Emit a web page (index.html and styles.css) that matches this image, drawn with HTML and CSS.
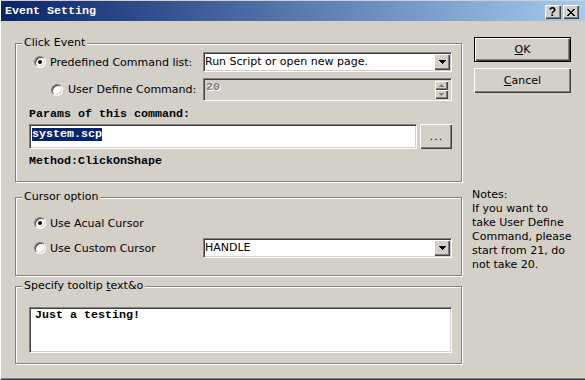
FILE: index.html
```html
<!DOCTYPE html>
<html lang="en">
<head>
  <meta charset="UTF-8">
  <meta name="viewport" content="width=device-width, initial-scale=1.0">
  <link rel="stylesheet" href="styles.css">
  <title>Event Setting</title>
</head>
<body>

<div class="dialog">
  <div class="titlebar">
    <div class="title-text">Event Setting</div>
    <div class="caption-buttons">
      <div class="caption-btn help">?</div>
      <div class="caption-btn close">
        <svg width="8" height="7" viewBox="0 0 8 7" shape-rendering="crispEdges">
          <path d="M0 0h2v1h1v1h2v-1h1v-1h2v1h-1v1h-1v1h-1v1h1v1h1v1h1v1h-2v-1h-1v-1h-2v1h-1v1h-2v-1h1v-1h1v-1h1v-1h-1v-1h-1v-1h-1z" fill="#000"/>
        </svg>
      </div>
    </div>
  </div>

  <div class="client">
    <div class="groups">

      <div class="group group-click">
        <div class="group-title">Click Event</div>

        <div class="option-row first-row">
          <div class="option">
            <span class="radio"><span class="radio-dot"></span></span>
            <span>Predefined Command list:</span>
          </div>
          <div class="combo">
            <span class="combo-text">Run Script or open new page.</span>
            <div class="combo-btn">
              <svg width="7" height="4" viewBox="0 0 7 4" shape-rendering="crispEdges"><path d="M0 0h7v1h-1v1h-1v1h-1v1h-1v-1h-1v-1h-1v-1h-1z" fill="#000"/></svg>
            </div>
          </div>
        </div>

        <div class="option-row spin-row">
          <div class="option indent">
            <span class="radio"></span>
            <span>User Define Command:</span>
          </div>
          <div class="spin">
            <span class="spin-text">20</span>
            <div class="spin-buttons">
              <div class="spin-btn">
                <svg width="5" height="3" viewBox="0 0 5 3" shape-rendering="crispEdges"><path d="M2 0h1v1h1v1h1v1h-5v-1h1v-1h1z" fill="#808080"/></svg>
              </div>
              <div class="spin-btn">
                <svg width="5" height="3" viewBox="0 0 5 3" shape-rendering="crispEdges"><path d="M0 0h5v1h-1v1h-1v1h-1v-1h-1v-1h-1z" fill="#808080"/></svg>
              </div>
            </div>
          </div>
        </div>

        <div class="mono-label params-label">Params of this command:</div>

        <div class="edit-row">
          <div class="edit"><span class="selected">system.scp</span></div>
          <div class="btn browse-btn">...</div>
        </div>

        <div class="mono-label method-label">Method:ClickOnShape</div>
      </div>

      <div class="group group-cursor">
        <div class="group-title">Cursor option</div>

        <div class="option-row cursor-first">
          <div class="option">
            <span class="radio"><span class="radio-dot"></span></span>
            <span>Use Acual Cursor</span>
          </div>
        </div>

        <div class="option-row cursor-second">
          <div class="option">
            <span class="radio"></span>
            <span>Use Custom Cursor</span>
          </div>
          <div class="combo">
            <span class="combo-text">HANDLE</span>
            <div class="combo-btn">
              <svg width="7" height="4" viewBox="0 0 7 4" shape-rendering="crispEdges"><path d="M0 0h7v1h-1v1h-1v1h-1v1h-1v-1h-1v-1h-1v-1h-1z" fill="#000"/></svg>
            </div>
          </div>
        </div>
      </div>

      <div class="group group-tooltip">
        <div class="group-title">Specify tooltip <u>t</u>ext&amp;o</div>
        <div class="memo">Just a testing!</div>
      </div>

    </div>

    <div class="side">
      <div class="btn btn-default"><span><u>O</u>K</span></div>
      <div class="btn btn-cancel"><span><u>C</u>ancel</span></div>
      <div class="notes">
        Notes:<br>
        If you want to<br>
        take User Define<br>
        Command, please<br>
        start from 21, do<br>
        not take 20.
      </div>
    </div>
  </div>
</div>

</body>
</html>
```

FILE: styles.css
```css
* {
  box-sizing: border-box;
}

body {
  margin: 0;
  background-color: #d4d0c8;
}

.dialog {
  width: 585px;
  height: 380px;
  background-color: #d4d0c8;
  border-top: 1px solid #d4d0c8;
  border-left: 1px solid #fff;
  border-bottom: 1px solid #404040;
  box-shadow: inset 0 -1px 0 #808080;
  font-family: "DejaVu Sans", sans-serif;
  font-size: 11px;
  color: #000;
}

/* title bar */
.titlebar {
  height: 20px;
  display: flex;
  align-items: flex-start;
  background: linear-gradient(to right, #0a246a, #a6caf0);
}

.title-text {
  padding: 1px 0 0 4px;
  line-height: 19px;
  color: #fff;
  font-family: "Liberation Mono", monospace;
  font-weight: bold;
  font-size: 11.67px;
}

.caption-buttons {
  margin-left: auto;
  margin-right: 6px;
  padding-top: 4px;
  display: flex;
  gap: 2px;
}

.caption-btn {
  width: 16px;
  height: 14px;
  display: flex;
  align-items: center;
  justify-content: center;
  background-color: #d4d0c8;
  box-shadow: inset 1px 1px 0 #fff, inset -1px -1px 0 #404040, inset -2px -2px 0 #808080;
}

.caption-btn.help {
  font-family: "Liberation Sans", sans-serif;
  font-weight: bold;
  font-size: 12px;
  line-height: 14px;
  padding-right: 1px;
}

/* client */
.client {
  display: flex;
}

.groups {
  margin-left: 14px;
  width: 447px;
}

.group {
  border: 1px solid #808080;
  box-shadow: inset 1px 1px 0 #fff, 1px 1px 0 #fff;
  display: flex;
  flex-direction: column;
}

.group-title {
  align-self: flex-start;
  margin: -8px 0 0 6px;
  padding: 0 2px;
  line-height: 14px;
  background-color: #d4d0c8;
}

.group-click {
  margin-top: 22px;
  height: 139px;
}

.group-cursor {
  margin-top: 15px;
  height: 79px;
}

.group-tooltip {
  margin-top: 10px;
  height: 78px;
}

.option-row {
  display: flex;
  align-items: center;
  height: 20px;
}

.first-row {
  margin-top: 2px;
}

.spin-row {
  margin-top: 6px;
  height: 23px;
}

.cursor-first {
  margin-top: 9px;
}

.cursor-second {
  margin-top: 5px;
}

.option {
  width: 187px;
  padding-left: 18px;
  display: flex;
  align-items: center;
  gap: 4px;
  white-space: nowrap;
}

.option.indent {
  padding-left: 35px;
  gap: 5px;
}

.radio {
  width: 12px;
  height: 12px;
  flex-shrink: 0;
  border-radius: 50%;
  border: 1px solid;
  border-color: #808080 #fff #fff #808080;
  background-color: #fff;
  box-shadow: inset 1px 1px 0 #404040, inset -1px -1px 0 #d4d0c8;
  display: flex;
  align-items: center;
  justify-content: center;
}

.radio-dot {
  width: 4px;
  height: 4px;
  border-radius: 50%;
  background-color: #000;
}

/* sunken fields */
.combo,
.spin,
.edit,
.memo {
  border: 1px solid;
  border-color: #808080 #fff #fff #808080;
  box-shadow: inset 1px 1px 0 #404040, inset -1px -1px 0 #d4d0c8;
  background-color: #fff;
}

.combo {
  width: 249px;
  height: 20px;
  padding: 1px;
  display: flex;
  align-items: center;
}

.combo-text {
  padding-left: 0;
  line-height: 16px;
  white-space: nowrap;
}

.combo-btn {
  margin-left: auto;
  width: 16px;
  height: 16px;
  display: flex;
  align-items: center;
  justify-content: center;
  background-color: #d4d0c8;
  box-shadow: inset 1px 1px 0 #fff, inset -1px -1px 0 #404040, inset -2px -2px 0 #808080;
}

.spin {
  width: 249px;
  height: 23px;
  padding: 1px;
  display: flex;
  background-color: #d4d0c8;
}

.spin-text {
  padding: 2px 0 0 1px;
  line-height: 10px;
  font-family: "Liberation Mono", monospace;
  font-weight: bold;
  font-size: 11.67px;
  color: #808080;
  text-shadow: 1px 1px 0 #fff;
}

.spin-buttons {
  margin: 1px 2px 0 auto;
  width: 13px;
  display: flex;
  flex-direction: column;
}

.spin-btn {
  height: 9px;
  display: flex;
  align-items: center;
  justify-content: center;
  background-color: #d4d0c8;
  box-shadow: inset 1px 1px 0 #fff, inset -1px -1px 0 #404040, inset -2px -2px 0 #808080;
}

.mono-label {
  padding-left: 13px;
  line-height: 14px;
  font-family: "Liberation Mono", monospace;
  font-weight: bold;
  font-size: 11.67px;
}

.params-label {
  margin-top: 6px;
}

.method-label {
  margin-top: 5px;
}

.edit-row {
  margin: 3px 0 0 13px;
  display: flex;
  gap: 3px;
}

.edit {
  width: 388px;
  height: 25px;
  padding: 2px 0 0 2px;
}

.selected {
  display: inline-block;
  line-height: 13px;
  background-color: #0a246a;
  color: #fff;
  font-family: "Liberation Mono", monospace;
  font-weight: bold;
  font-size: 11.67px;
}

.memo {
  margin: 14px 0 0 13px;
  width: 423px;
  height: 46px;
  padding: 0 5px;
  line-height: 14px;
  font-family: "Liberation Mono", monospace;
  font-weight: bold;
  font-size: 11.67px;
}

/* buttons */
.btn {
  display: flex;
  align-items: center;
  justify-content: center;
  background-color: #d4d0c8;
  box-shadow: inset 1px 1px 0 #fff, inset -1px -1px 0 #404040, inset -2px -2px 0 #808080;
}

.browse-btn {
  width: 32px;
  height: 25px;
  letter-spacing: 1px;
  padding-left: 1px;
}

.side {
  margin-left: 12px;
  padding-top: 16px;
  width: 97px;
  display: flex;
  flex-direction: column;
}

.btn-default {
  height: 25px;
  border: 1px solid #000;
}

.btn-cancel {
  margin-top: 6px;
  height: 25px;
}

.notes {
  margin: 95px 0 0 -2px;
  line-height: 14px;
  white-space: nowrap;
}
```
